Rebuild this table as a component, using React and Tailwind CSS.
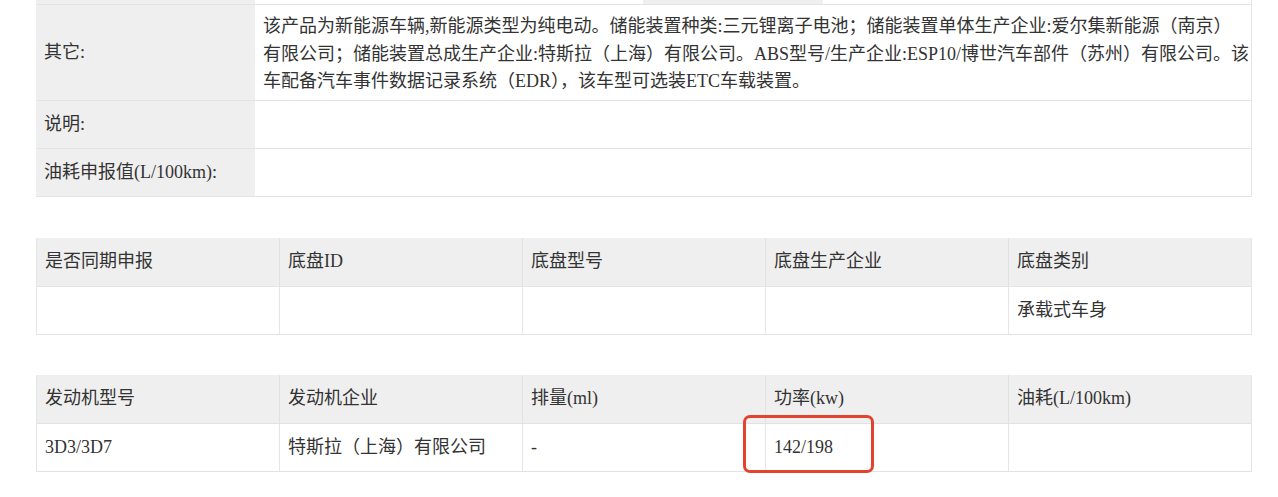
import React from "react";

const font = { fontFamily: '"Liberation Serif", "Noto Sans CJK SC", serif' };

function Grid5({ header, body, children }) {
  return (
    <div className="relative w-[1216px] border-l border-r border-[#e6e6e6]">
      <div className="flex h-[49px] bg-[#efefef] border-b border-[#e2e2e2]">
        {header.map((h, i) => (
          <div
            key={i}
            className={`flex-1 flex items-center pl-[8px] ${i > 0 ? "border-l border-[#e2e2e2]" : ""}`}
          >
            {h}
          </div>
        ))}
      </div>
      <div className="flex h-[48px] bg-white border-b border-[#e2e2e2]">
        {body.map((b, i) => (
          <div
            key={i}
            className={`flex-1 flex items-center pl-[8px] ${i > 0 ? "border-l border-[#e6e6e6]" : ""}`}
          >
            {b}
          </div>
        ))}
      </div>
      {children}
    </div>
  );
}

export default function App() {
  return (
    <div className="w-[1278px] h-[497px] bg-white overflow-hidden text-[18px] text-[#333]" style={font}>
      <div className="pl-[36px]">
        {/* Table 1 */}
        <div className="w-[1216px] border-r border-[#e6e6e6]">
          <div className="flex h-[5px] border-b border-[#e4e4e4]">
            <div className="w-[219px] bg-[#efefef]" />
            <div className="w-[388px] bg-white" />
            <div className="w-[180px] bg-[#efefef]" />
            <div className="flex-1 bg-white" />
          </div>
          <div className="flex border-b border-[#e4e4e4]">
            <div className="w-[219px] shrink-0 bg-[#efefef] flex items-center pl-[8px]">其它:</div>
            <div className="flex-1 pl-[8px] pr-[4px] pt-[8px] pb-[4px] leading-[27.5px] whitespace-nowrap">
              该产品为新能源车辆,新能源类型为纯电动。储能装置种类:三元锂离子电池；储能装置单体生产企业:爱尔集新能源（南京）
              <br />
              有限公司；储能装置总成生产企业:特斯拉（上海）有限公司。ABS型号/生产企业:ESP10/博世汽车部件（苏州）有限公司。该
              <br />
              车配备汽车事件数据记录系统（EDR），该车型可选装ETC车载装置。
            </div>
          </div>
          <div className="flex h-[48px] border-b border-[#e4e4e4]">
            <div className="w-[219px] shrink-0 bg-[#efefef] flex items-center pl-[8px]">说明:</div>
            <div className="flex-1" />
          </div>
          <div className="flex h-[48px] border-b border-[#e4e4e4]">
            <div className="w-[219px] shrink-0 bg-[#efefef] flex items-center pl-[8px]">油耗申报值(L/100km):</div>
            <div className="flex-1" />
          </div>
        </div>

        <div className="h-[41px]" />

        <Grid5
          header={["是否同期申报", "底盘ID", "底盘型号", "底盘生产企业", "底盘类别"]}
          body={["", "", "", "", "承载式车身"]}
        />

        <div className="h-[40px]" />

        <Grid5
          header={["发动机型号", "发动机企业", "排量(ml)", "功率(kw)", "油耗(L/100km)"]}
          body={["3D3/3D7", "特斯拉（上海）有限公司", "-", "142/198", ""]}
        >
          <div className="absolute left-[706px] top-[40px] w-[131px] h-[58px] border-[3px] border-[#e2432f] rounded-[7px]" />
        </Grid5>
      </div>
    </div>
  );
}
